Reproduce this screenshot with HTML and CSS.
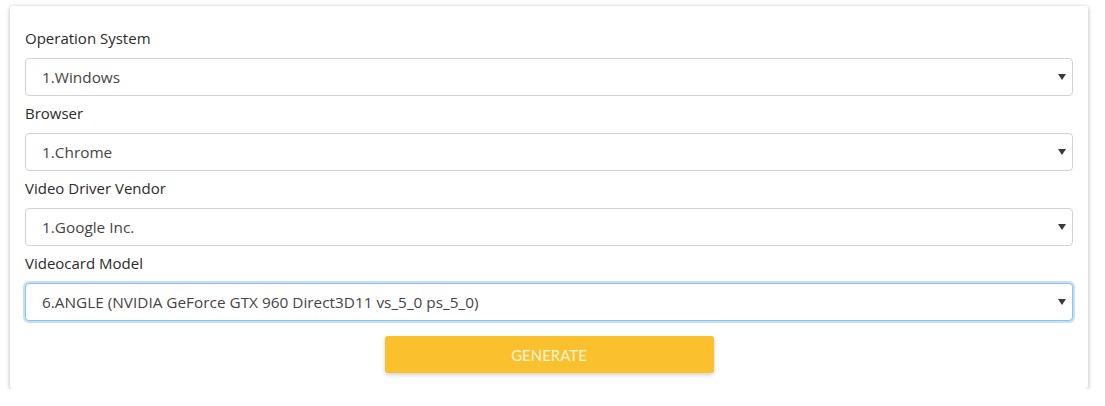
FILE: index.html
```html
<!DOCTYPE html>
<html>
<head>
<meta charset="utf-8">
<link rel="stylesheet" href="styles.css">
</head>
<body>
<div class="card">
  <div class="group">
    <label class="label">Operation System</label>
    <div class="select-wrap">
      <select class="select"><option>1.Windows</option></select>
      <svg class="arrow" width="8" height="6" viewBox="0 0 8 6"><path d="M0 0H8L4 6Z" fill="#3a3a3a"/></svg>
    </div>
  </div>
  <div class="group">
    <label class="label">Browser</label>
    <div class="select-wrap">
      <select class="select"><option>1.Chrome</option></select>
      <svg class="arrow" width="8" height="6" viewBox="0 0 8 6"><path d="M0 0H8L4 6Z" fill="#3a3a3a"/></svg>
    </div>
  </div>
  <div class="group">
    <label class="label">Video Driver Vendor</label>
    <div class="select-wrap">
      <select class="select"><option>1.Google Inc.</option></select>
      <svg class="arrow" width="8" height="6" viewBox="0 0 8 6"><path d="M0 0H8L4 6Z" fill="#3a3a3a"/></svg>
    </div>
  </div>
  <div class="group">
    <label class="label">Videocard Model</label>
    <div class="select-wrap">
      <select class="select focused"><option>6.ANGLE (NVIDIA GeForce GTX 960 Direct3D11 vs_5_0 ps_5_0)</option></select>
      <svg class="arrow" width="8" height="6" viewBox="0 0 8 6"><path d="M0 0H8L4 6Z" fill="#3a3a3a"/></svg>
    </div>
  </div>
  <div class="actions">
    <button class="btn">GENERATE</button>
  </div>
</div>
</body>
</html>
```

FILE: styles.css
```css
html, body {
  margin: 0;
  padding: 0;
  background: #ffffff;
}
body {
  padding: 6px 17px 0 10px;
  font-family: "Open Sans", "Noto Sans", sans-serif;
}
.card {
  background: #fff;
  border-radius: 3px;
  box-shadow: 0 1px 4px rgba(0, 0, 0, 0.32);
  padding: 15px 15px 16px 15px;
  height: 383px;
  box-sizing: border-box;
}
.group {
  display: flex;
  flex-direction: column;
}
.label {
  display: block;
  margin-top: 5px;
  margin-bottom: 8px;
  font-size: 15px;
  line-height: 24px;
  color: #2b2b2b;
}
.select-wrap {
  position: relative;
}
.select {
  display: block;
  width: 100%;
  height: 38px;
  box-sizing: border-box;
  -webkit-appearance: none;
  appearance: none;
  background: #fff;
  border: 1px solid #d2d2d2;
  border-radius: 4px;
  padding: 0 30px 0 16px;
  font-family: "Open Sans", "Noto Sans", sans-serif;
  font-size: 15.35px;
  color: #444;
  outline: none;
}
.select.focused {
  border-color: #8cc0ee;
  box-shadow: 0 0 0 2px rgba(150, 198, 240, 0.55);
}
.arrow {
  position: absolute;
  right: 7px;
  top: 16px;
}
.actions {
  display: flex;
  justify-content: center;
  margin-top: 15px;
}
.btn {
  width: 329px;
  height: 37px;
  border: none;
  border-radius: 3px;
  background: #fbc02d;
  color: #fff6dc;
  font-family: "Lato", "Open Sans", sans-serif;
  font-size: 15px;
  box-shadow: 0 2px 4px rgba(0, 0, 0, 0.18);
  cursor: pointer;
}
```
